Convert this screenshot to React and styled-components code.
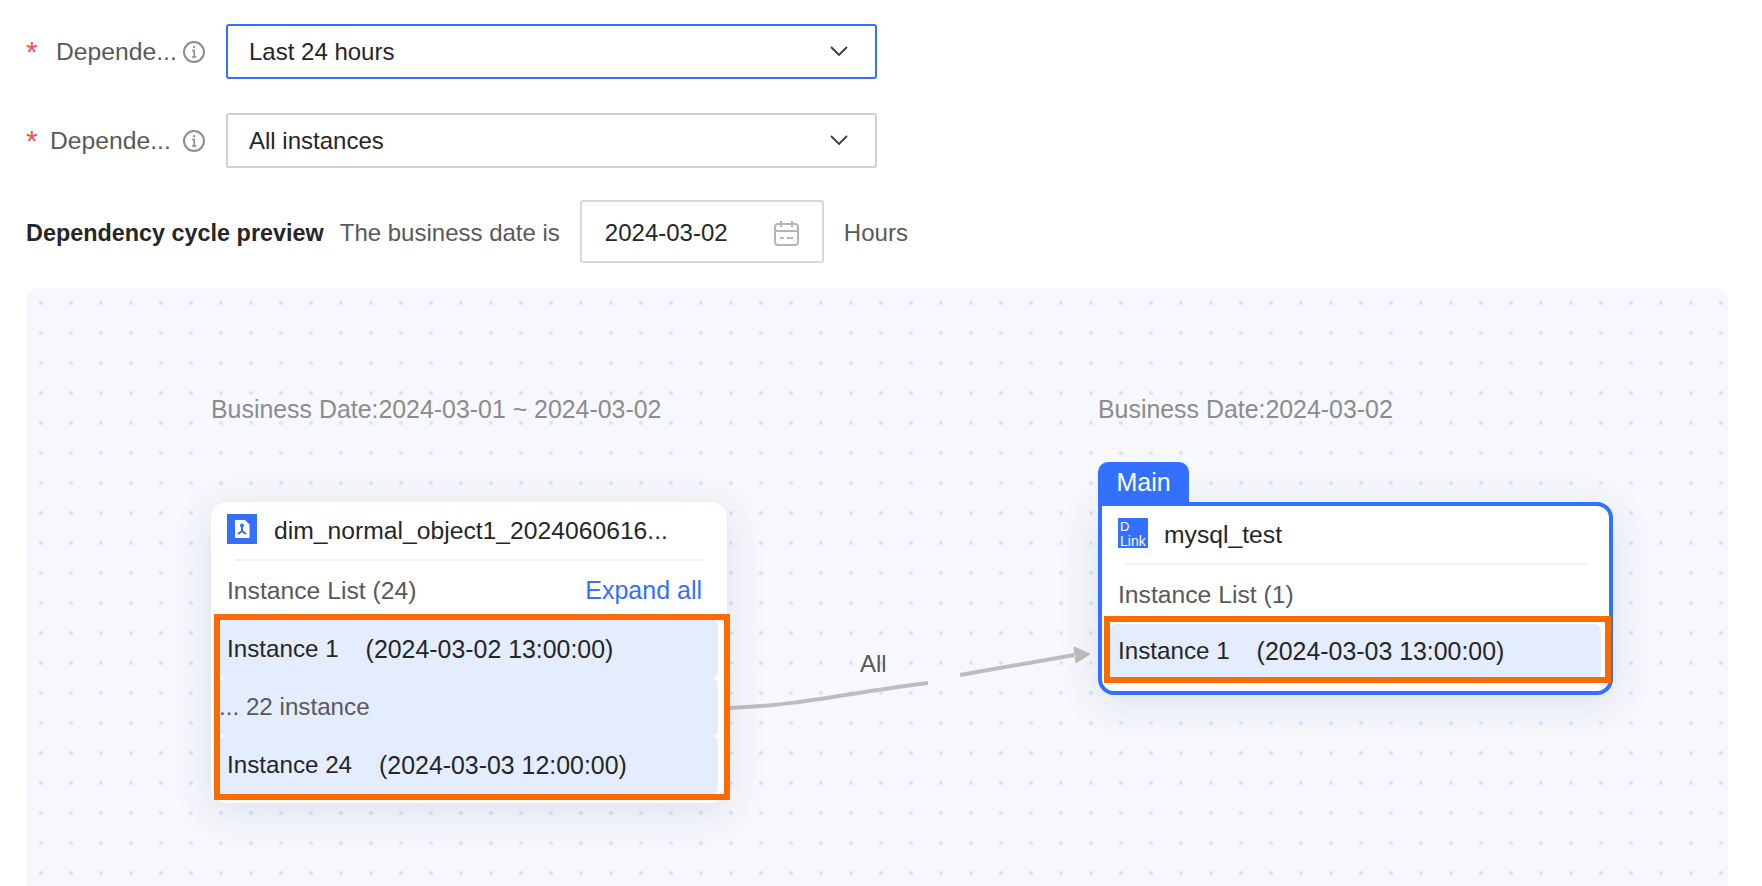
import * as React from 'react';
import styled, { createGlobalStyle } from 'styled-components';

const Global = createGlobalStyle`
  html, body { margin: 0; padding: 0; background: #fff; }
  body { height: 886px; overflow: hidden; font-family: "Liberation Sans", Arial, sans-serif; }
`;

const Page = styled.div`
  padding: 24px 0 0 26px;
  width: 1702px;
`;

const FormRow = styled.div`
  display: flex;
  align-items: center;
  height: 55px;
  margin-bottom: ${(p) => p.$gap}px;
`;

const Label = styled.div`
  display: flex;
  align-items: center;
  width: 200px;
  font-size: 24.7px;
  color: #595959;
  position: relative;
`;

const Star = styled.span`
  color: #ff4d4f;
  font-size: 30px;
  line-height: 24px;
  margin-right: ${(p) => p.$gap}px;
  width: 12px;
`;

const InfoWrap = styled.span`
  position: absolute;
  left: 156px;
  top: 50%;
  transform: translateY(-50%);
  display: flex;
`;

const Select = styled.div`
  width: 651px;
  height: 55px;
  box-sizing: border-box;
  display: flex;
  align-items: center;
  justify-content: space-between;
  padding: 0 27px 0 21px;
  border: 2px solid ${(p) => (p.$active ? '#3370ff' : '#d0d0d0')};
  border-radius: 3px;
  font-size: 24px;
  color: #262626;
`;

const PreviewRow = styled.div`
  display: flex;
  align-items: center;
  height: 63px;
`;

const PreviewTitle = styled.div`
  font-size: 23.4px;
  font-weight: 700;
  color: #262626;
  margin-right: 16px;
  padding-top: 3px;
`;

const Muted = styled.div`
  font-size: 24px;
  color: #595959;
  padding-top: 2px;
`;

const DateBox = styled.div`
  width: 244px;
  height: 63px;
  box-sizing: border-box;
  margin: 0 20px;
  display: flex;
  align-items: center;
  justify-content: space-between;
  padding: 2px 23px 0;
  border: 2px solid #d9d9d9;
  border-radius: 3px;
  font-size: 24px;
  color: #262626;
`;

const Canvas = styled.div`
  position: relative;
  margin-top: 25px;
  width: 1702px;
  height: 598px;
  border-radius: 12px 12px 0 0;
  overflow: hidden;
  background-color: #f6f8fd;
  background-image: radial-gradient(circle at 2px 2px, #dce3ff 2px, transparent 2.2px);
  background-size: 30px 30px;
  background-position: 13px 13px;
`;

const DateCaption = styled.div`
  position: absolute;
  left: ${(p) => p.$left}px;
  top: 107px;
  font-size: 24.9px;
  color: #8c8c8c;
  white-space: nowrap;
`;

const Card = styled.div`
  position: absolute;
  left: ${(p) => p.$left}px;
  top: 214px;
  width: ${(p) => p.$width}px;
  height: ${(p) => p.$height}px;
  box-sizing: border-box;
  background: #fff;
  box-shadow: 0 8px 40px rgba(40, 50, 80, 0.12);
  border-radius: ${(p) => (p.$main ? '0 16px 16px 16px' : '16px')};
  border: ${(p) => (p.$main ? '4px solid #3370ff' : 'none')};
  padding: ${(p) => (p.$main ? '12px 8px 0 8px' : '12px 9px 0 9px')};
  display: flex;
  flex-direction: column;
`;

const Tab = styled.div`
  position: absolute;
  left: -4px;
  top: -44px;
  width: 91px;
  height: 40px;
  background: #3370ff;
  color: #fff;
  font-size: 25px;
  border-radius: 10px 10px 0 0;
  display: flex;
  align-items: center;
  justify-content: center;
`;

const CardHead = styled.div`
  display: flex;
  align-items: center;
  gap: ${(p) => p.$gap}px;
  height: 30px;
  padding: 0 ${(p) => p.$inset}px;
  font-size: 24.7px;
  color: #262626;
  white-space: nowrap;
`;

const CardName = styled.span`
  padding-top: 4px;
`;

const Divider = styled.div`
  height: 2px;
  background: #f0f0f0;
  margin: 15px 14px 0 15px;
`;

const ListHead = styled.div`
  display: flex;
  align-items: center;
  justify-content: space-between;
  height: 59px;
  padding: 0 16px 0 ${(p) => p.$inset}px;
  font-size: 24.7px;
  color: #595959;
`;

const ExpandLink = styled.span`
  color: #3370ff;
  font-size: 25px;
`;

const InstanceRow = styled.div`
  height: ${(p) => p.$height || 58}px;
  flex: none;
  display: flex;
  align-items: center;
  gap: 27px;
  padding-left: ${(p) => p.$inset}px;
  background: #e3edfd;
  border-radius: 6px;
  font-size: 24.2px;
  color: #262626;
  white-space: nowrap;
`;

const CollapsedRow = styled(InstanceRow)`
  padding-left: 0;
  text-indent: -1px;
  color: #595959;
`;

const InstanceTime = styled.span`
  font-size: 24.9px;
`;

const Highlight = styled.div`
  position: absolute;
  left: ${(p) => p.$left}px;
  top: ${(p) => p.$top}px;
  width: ${(p) => p.$width}px;
  height: ${(p) => p.$height}px;
  box-sizing: border-box;
  border: 6px solid #ff6a00;
  pointer-events: none;
`;

const EdgeLabel = styled.div`
  position: absolute;
  left: 834px;
  top: 362px;
  font-size: 24px;
  color: #595959;
`;

const EdgeSvg = styled.svg`
  position: absolute;
  left: 0;
  top: 0;
`;

const InfoIcon = () => (
  <svg width="24" height="24" viewBox="0 0 24 24" fill="none" stroke="#8c8c8c" strokeWidth="2">
    <circle cx="12" cy="12" r="10" />
    <path d="M10 10.5h2.2V17M10 17h4.5" strokeWidth="1.6" />
    <circle cx="12" cy="7.2" r="1.1" fill="#8c8c8c" stroke="none" />
  </svg>
);

const Chevron = () => (
  <svg width="18" height="11" viewBox="0 0 18 11" fill="none" stroke="#3a3a3a" strokeWidth="1.8">
    <path d="M1 1l8 8 8-8" />
  </svg>
);

const CalendarIcon = () => (
  <svg width="25" height="26" viewBox="0 0 25 26" fill="none" stroke="#b5b5b5" strokeWidth="2">
    <rect x="1" y="4" width="23" height="21" rx="3" />
    <path d="M7 1v6M18 1v6M1 11h23" />
    <path d="M6 18h4M13 18h6" />
  </svg>
);

const ObjectIcon = () => (
  <svg width="30" height="30" viewBox="0 0 30 30">
    <rect width="30" height="30" fill="#3370ff" />
    <path d="M8 6h10l4.500 4.500V24H8z" fill="#fff" />
    <circle cx="15" cy="11.500" r="2" fill="#3370ff" />
    <path d="M15 12v5M15 17l-4 3M15 17l4 3" stroke="#3370ff" strokeWidth="2" fill="none" />
  </svg>
);

const LinkIcon = () => (
  <svg width="30" height="30" viewBox="0 0 30 30">
    <rect width="30" height="30" fill="#3370ff" />
    <text x="2" y="12.500" fontSize="13" fill="#fff" fontFamily="Liberation Sans, sans-serif">D</text>
    <text x="2" y="28" fontSize="14" fill="#fff" fontFamily="Liberation Sans, sans-serif">Link</text>
  </svg>
);

const App = () => {
  return (
    <>
      <Global />
      <Page>
        <FormRow $gap={34}>
          <Label>
            <Star $gap={18}>*</Star>
            Depende...
            <InfoWrap><InfoIcon /></InfoWrap>
          </Label>
          <Select $active>
            Last 24 hours
            <Chevron />
          </Select>
        </FormRow>
        <FormRow $gap={32}>
          <Label>
            <Star $gap={12}>*</Star>
            Depende...
            <InfoWrap><InfoIcon /></InfoWrap>
          </Label>
          <Select>
            All instances
            <Chevron />
          </Select>
        </FormRow>
        <PreviewRow>
          <PreviewTitle>Dependency cycle preview</PreviewTitle>
          <Muted>The business date is</Muted>
          <DateBox>
            2024-03-02
            <CalendarIcon />
          </DateBox>
          <Muted>Hours</Muted>
        </PreviewRow>
        <Canvas>
          <DateCaption $left={185}>Business Date:2024-03-01 ~ 2024-03-02</DateCaption>
          <DateCaption $left={1072}>Business Date:2024-03-02</DateCaption>

          <EdgeSvg width="1702" height="598" fill="none" stroke="#bdbdbd" strokeWidth="4">
            <path d="M704 420C770 418 840 402 902 395" />
            <path d="M934 387L1048 367" />
            <path d="M1064 366L1048 359L1050 375Z" fill="#bdbdbd" strokeWidth="1" />
          </EdgeSvg>
          <EdgeLabel>All</EdgeLabel>

          <Card $left={185} $width={516} $height={301}>
            <CardHead $inset={7} $gap={17}>
              <ObjectIcon />
              <CardName>dim_normal_object1_2024060616...</CardName>
            </CardHead>
            <Divider />
            <ListHead $inset={7}>
              Instance List (24)
              <ExpandLink>Expand all</ExpandLink>
            </ListHead>
            <InstanceRow $inset={7}>
              <span>Instance 1</span>
              <InstanceTime>(2024-03-02 13:00:00)</InstanceTime>
            </InstanceRow>
            <CollapsedRow>... 22 instance</CollapsedRow>
            <InstanceRow $inset={7}>
              <span>Instance 24</span>
              <InstanceTime>(2024-03-03 12:00:00)</InstanceTime>
            </InstanceRow>
            <Highlight $left={3} $top={112} $width={516} $height={186} />
          </Card>

          <Card $left={1072} $width={515} $height={193} $main>
            <Tab>Main</Tab>
            <CardHead $inset={8} $gap={16}>
              <LinkIcon />
              <CardName>mysql_test</CardName>
            </CardHead>
            <Divider />
            <ListHead $inset={8}>Instance List (1)</ListHead>
            <InstanceRow $inset={8} $height={54}>
              <span>Instance 1</span>
              <InstanceTime>(2024-03-03 13:00:00)</InstanceTime>
            </InstanceRow>
            <Highlight $left={2} $top={110} $width={507} $height={67} />
          </Card>
        </Canvas>
      </Page>
    </>
  );
};

export default App;
